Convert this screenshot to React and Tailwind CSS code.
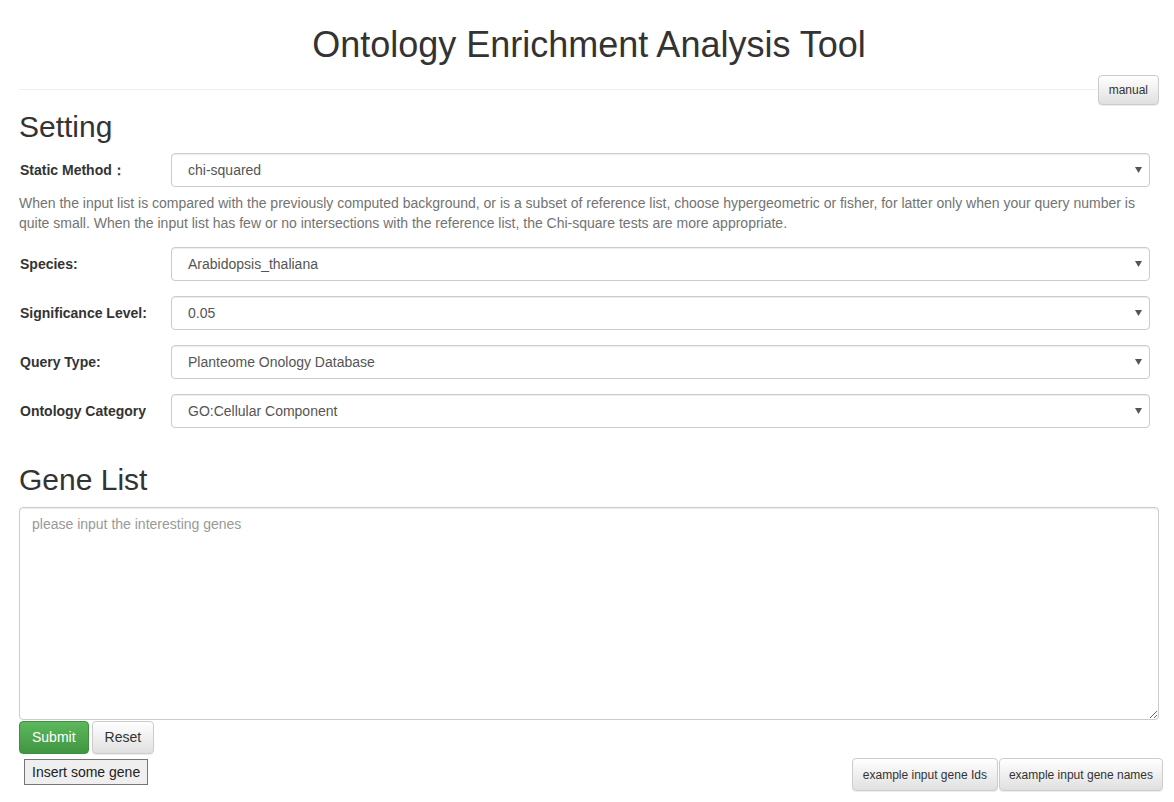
import React from 'react'

const font = { fontFamily: '"Liberation Sans", Arial, Helvetica, sans-serif' }

const rows = [
    { label: 'Species:', value: 'Arabidopsis_thaliana' },
    { label: 'Significance Level:', value: '0.05' },
    { label: 'Query Type:', value: 'Planteome Onology Database' },
    { label: 'Ontology Category', value: 'GO:Cellular Component' },
]

const Select = ({ value }) => (
    <div className="flex-1 h-[34px] flex items-center justify-between border border-[#ccc] rounded-[4px] bg-white pl-4 pr-[7px] text-[14px] text-[#555] shadow-[inset_0_1px_1px_rgba(0,0,0,0.075)]">
        <span>{value}</span>
        <svg width="7" height="6" viewBox="0 0 7 6"><path d="M0 0h7L3.5 6z" fill="#555" /></svg>
    </div>
)

const Row = ({ label, value }) => (
    <div className="flex items-center mr-[9px]">
        <div className="w-[152px] text-[14px] font-bold text-[#333] pl-px">{label}</div>
        <Select value={value} />
    </div>
)

const themeBtn = 'border border-[#ccc] rounded-[4px] bg-gradient-to-b from-white to-[#e0e0e0] text-[#333] shadow-[inset_0_1px_0_rgba(255,255,255,0.15),0_1px_1px_rgba(0,0,0,0.075)]'

export default function App() {
    return (
        <div style={font} className="bg-white min-h-[802px] pl-[19px] pr-[15px] text-[#333] text-[14px]">
            <h1 className="text-center text-[36px] leading-[40px] pt-[25px] pb-[24px]">Ontology Enrichment Analysis Tool</h1>
            <div className="relative border-t border-[#eee]">
                <button className={`absolute right-0 top-[-15px] h-[30px] px-[10px] text-[12px] ${themeBtn}`}>manual</button>
            </div>
            <h2 className="text-[30px] leading-[33px] mt-[20px] mb-[10px]">Setting</h2>
            <Row label="Static Method：" value="chi-squared" />
            <p className="text-[#737373] leading-[20px] mt-[6px] mb-[14px] pr-[10px]">
                When the input list is compared with the previously computed background, or is a subset of reference list, choose hypergeometric or fisher, for latter only when your query number is quite small. When the input list has few or no intersections with the reference list, the Chi-square tests are more appropriate.
            </p>
            <div className="flex flex-col gap-[15px]">
                {rows.map((r) => <Row key={r.label} {...r} />)}
            </div>
            <h2 className="text-[30px] leading-[33px] mt-[35px] mb-[11px]">Gene List</h2>
            <textarea
                placeholder="please input the interesting genes"
                className="block w-full h-[213px] border border-[#ccc] rounded-[4px] px-[12px] py-[6px] text-[14px] leading-[20px] placeholder:text-[#999] shadow-[inset_0_1px_1px_rgba(0,0,0,0.075)] outline-none"
            />
            <div className="flex gap-[3px] mt-[1px]">
                <button className="h-[33px] px-[12px] rounded-[4px] border border-[#3e8f3e] bg-gradient-to-b from-[#5cb85c] to-[#419641] text-white text-[14px]">Submit</button>
                <button className={`h-[33px] px-[12px] text-[14px] ${themeBtn}`}>Reset</button>
            </div>
            <div className="flex items-start justify-between mt-[5px]">
                <button className="ml-[5px] h-[26px] px-[7px] border border-[#767676] bg-[#efefef] text-[14px] text-[#222]">Insert some gene</button>
                <div className="flex gap-px mr-[-4px] mt-[-1px]">
                    <button className={`h-[33px] px-[10px] text-[12px] ${themeBtn}`}>example input gene Ids</button>
                    <button className={`h-[33px] px-[9px] text-[12px] ${themeBtn}`}>example input gene names</button>
                </div>
            </div>
        </div>
    )
}
